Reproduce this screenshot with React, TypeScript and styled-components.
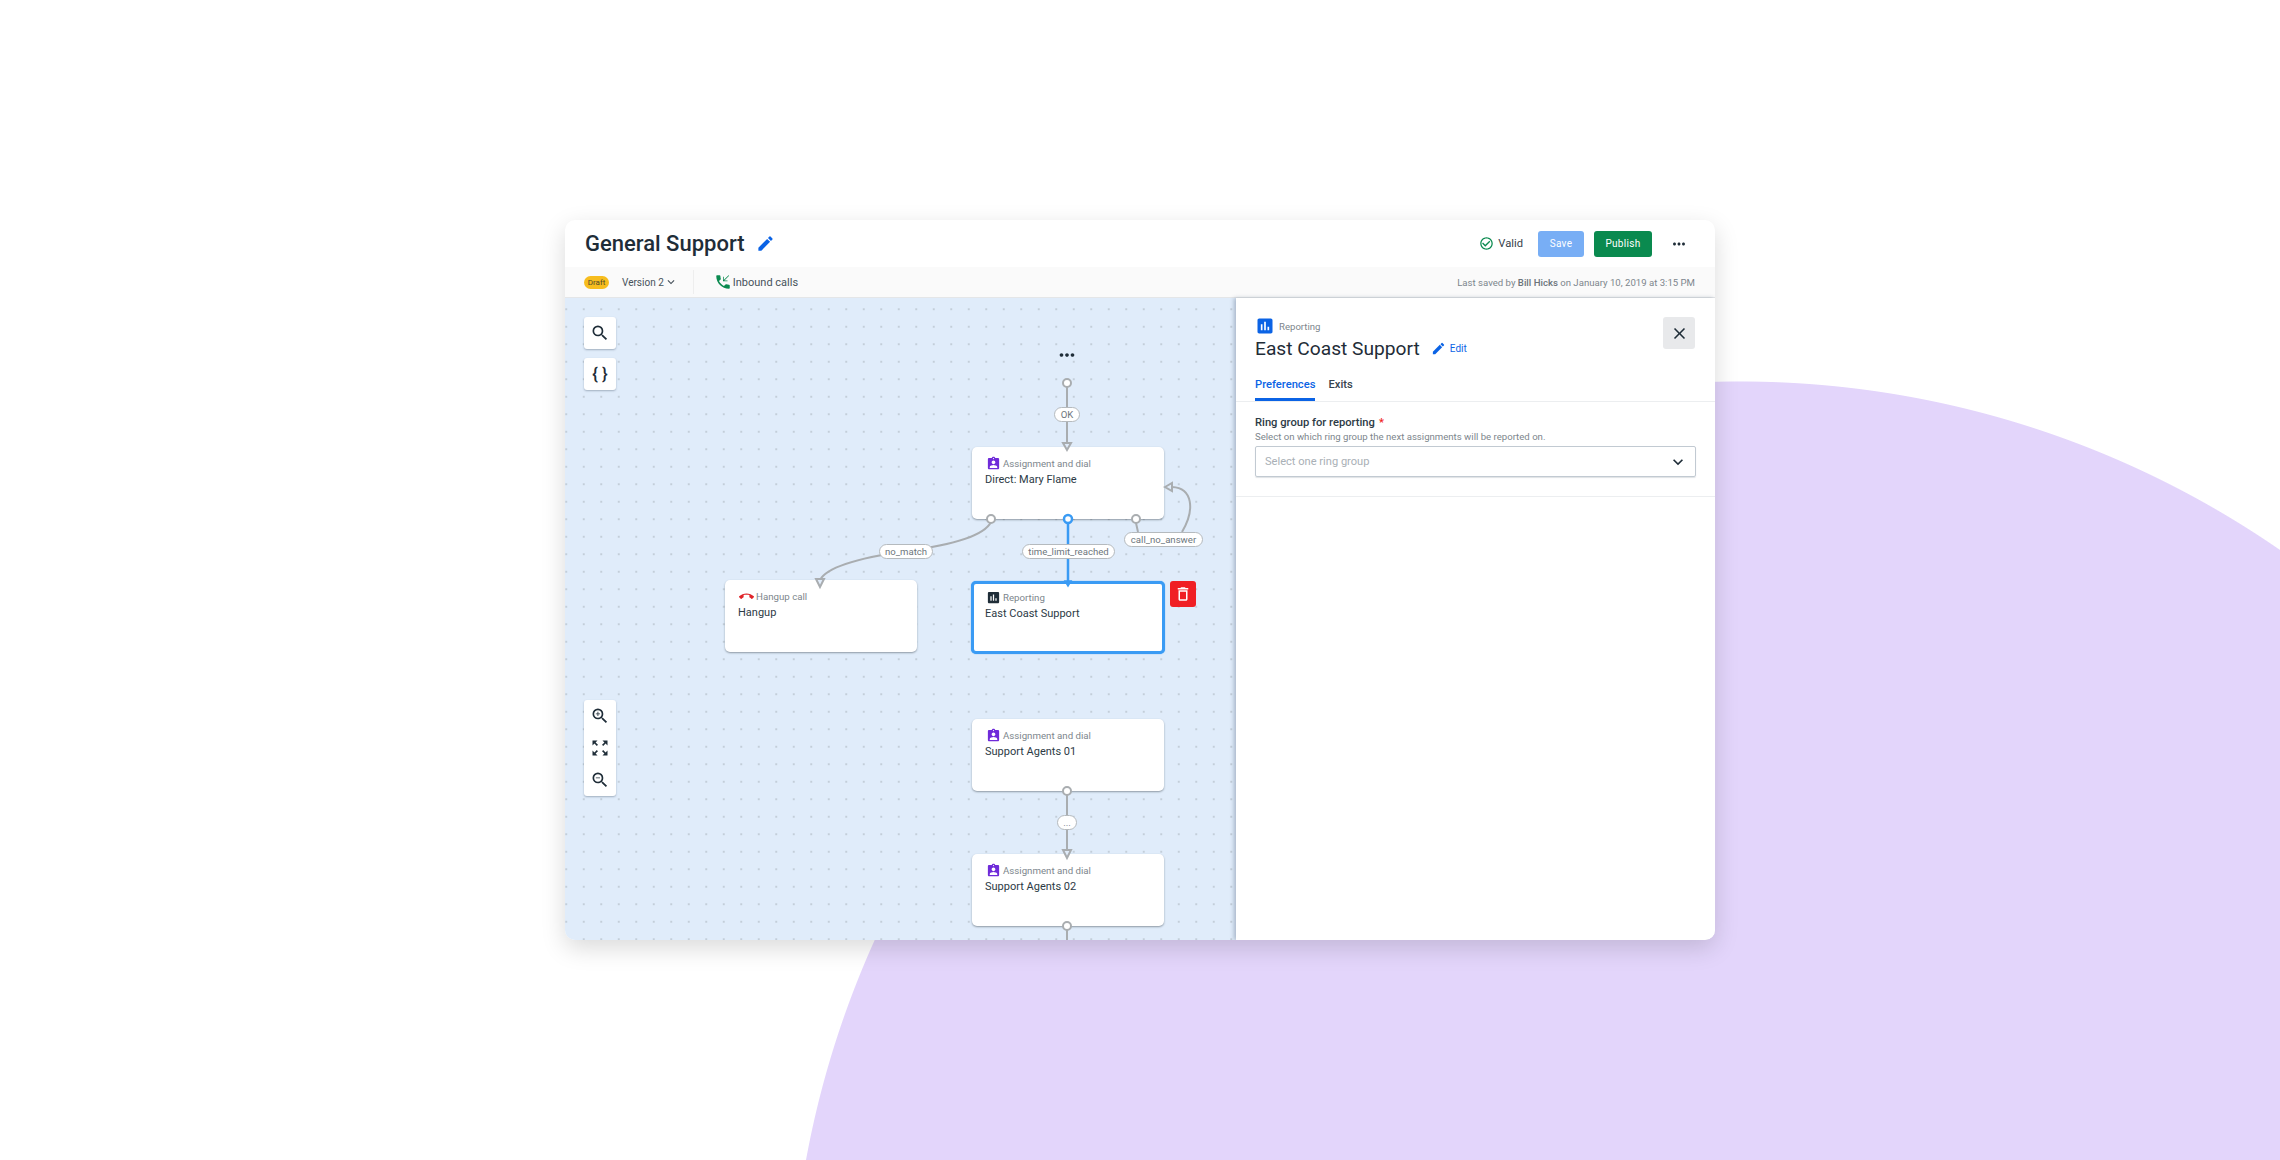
import styled, { createGlobalStyle } from 'styled-components';
import {
  MdAssessment,
  MdAssignmentInd,
  MdCallEnd,
  MdCheckCircleOutline,
  MdClose,
  MdDeleteOutline,
  MdEdit,
  MdKeyboardArrowDown,
  MdMoreHoriz,
  MdPhoneCallback,
  MdSearch,
  MdZoomIn,
  MdZoomOut,
  MdZoomOutMap,
} from 'react-icons/md';

const GlobalStyle = createGlobalStyle`
  html, body {
    margin: 0;
    padding: 0;
  }
  body {
    font-family: Roboto, "Noto Sans", sans-serif;
    color: #20303c;
    -webkit-font-smoothing: antialiased;
  }
`;

const Page = styled.div`
  width: 2280px;
  height: 1160px;
  overflow: hidden;
  box-sizing: border-box;
  padding: 220px 0 0 565px;
  background: radial-gradient(circle 950px at 1740px 1331px, #e3d5fb 99.9%, #ffffff 100%);
`;

const Window = styled.div`
  width: 1150px;
  height: 720px;
  display: flex;
  flex-direction: column;
  border-radius: 10px;
  overflow: hidden;
  background: #fff;
  box-shadow: 0 8px 24px rgba(0, 0, 0, 0.15);
`;

const Header = styled.header`
  height: 47px;
  flex: none;
  display: flex;
  align-items: center;
  padding: 0 20px;
`;

const Title = styled.h1`
  margin: 0;
  font-size: 22px;
  font-weight: 500;
  color: #1f2d38;
`;

const TitleEdit = styled.span`
  display: flex;
  margin-left: 11px;
  color: #0b63e5;
  font-size: 19px;
`;

const Spacer = styled.div`
  flex: 1;
`;

const Valid = styled.div`
  display: flex;
  align-items: center;
  gap: 4px;
  font-size: 11.2px;
  color: #37434d;
  margin-right: 15px;
  svg {
    color: #0a8a4f;
    font-size: 15px;
  }
`;

const ActionButton = styled.button<{ $bg: string; $w: number }>`
  width: ${(p) => p.$w}px;
  height: 26px;
  margin-right: 10px;
  border: 0;
  border-radius: 3px;
  padding: 0;
  background: ${(p) => p.$bg};
  color: #fff;
  font-family: inherit;
  font-size: 10px;
  font-weight: 400;
  letter-spacing: 0.3px;
`;

const MoreButton = styled.span`
  display: flex;
  margin: 0 7px 0 8px;
  font-size: 18px;
  color: #1f2d38;
`;

const SubBar = styled.div`
  height: 31px;
  flex: none;
  display: flex;
  align-items: center;
  padding: 0 20px 0 19px;
  background: #fafafa;
  border-bottom: 1px solid #e4e6e8;
  box-sizing: border-box;
`;

const Badge = styled.span`
  width: 25px;
  height: 13px;
  border-radius: 7px;
  background: #f7bd1e;
  color: #4f4a2a;
  font-size: 8px;
  line-height: 13px;
  text-align: center;
`;

const VersionPicker = styled.div`
  display: flex;
  align-items: center;
  margin-left: 13px;
  font-size: 10px;
  color: #47525b;
  svg {
    font-size: 14px;
  }
`;

const BarDivider = styled.div`
  width: 1px;
  height: 24px;
  margin: 0 20px 0 15px;
  background: #eeeeee;
`;

const CallType = styled.div`
  display: flex;
  align-items: center;
  gap: 1px;
  font-size: 11px;
  color: #47525b;
  svg {
    color: #0a8a4f;
    font-size: 18px;
  }
`;

const SavedNote = styled.div`
  font-size: 9.6px;
  color: #7d868d;
  b {
    font-weight: 500;
    color: #6b747b;
  }
`;

const Body = styled.div`
  flex: 1;
  display: flex;
  min-height: 0;
`;

const Canvas = styled.div`
  position: relative;
  flex: 1;
  overflow: hidden;
  padding: 19px;
  display: flex;
  flex-direction: column;
  align-items: flex-start;
  background-color: #e0ecfa;
  background-image: radial-gradient(circle, #c3ced9 0.7px, transparent 1.1px);
  background-size: 17.5px 17.5px;
  background-position: -7.5px 2.5px;
`;

const ToolCard = styled.div<{ $top?: number }>`
  width: 32px;
  flex: none;
  display: flex;
  flex-direction: column;
  margin-top: ${(p) => p.$top ?? 0}px;
  background: #fff;
  border-radius: 3px;
  box-shadow: 0 1px 2px rgba(40, 60, 80, 0.35);
`;

const ToolIcon = styled.span`
  height: 32px;
  display: flex;
  align-items: center;
  justify-content: center;
  font-size: 20px;
  color: #1f2d38;
`;

const Braces = styled(ToolIcon)`
  font-size: 17px;
  font-weight: 500;
`;

const Edges = styled.svg`
  position: absolute;
  left: 0;
  top: 0;
`;

const Dots = styled.span`
  position: absolute;
  left: 485px;
  top: 46px;
  width: 34px;
  display: flex;
  justify-content: center;
  font-size: 22px;
  color: #1f2d38;
`;

const Node = styled.div<{ $x: number; $y: number; $selected?: boolean }>`
  position: absolute;
  left: ${(p) => p.$x}px;
  top: ${(p) => p.$y}px;
  width: ${(p) => (p.$selected ? 194 : 192)}px;
  height: ${(p) => (p.$selected ? 73 : 72)}px;
  box-sizing: border-box;
  padding: ${(p) => (p.$selected ? '5px 11px' : '8px 13px')};
  background: #fff;
  border-radius: 5px;
  border: ${(p) => (p.$selected ? '3px solid #3a9bf4' : '0')};
  box-shadow: ${(p) => (p.$selected ? '0 0 1px #3a9bf4' : '0 1px 2px rgba(40, 50, 60, 0.45)')};
`;

const NodeKind = styled.div<{ $tint: string }>`
  display: flex;
  align-items: center;
  gap: 2px;
  height: 16px;
  padding-left: 1px;
  font-size: 9.7px;
  color: #7d868d;
  svg {
    font-size: 15px;
    color: ${(p) => p.$tint};
  }
`;

const NodeName = styled.div`
  margin-top: 1px;
  font-size: 11px;
  line-height: 15px;
  color: #2c3a45;
`;

const EdgeLabel = styled.span<{ $x: number; $y: number; $w: number }>`
  position: absolute;
  left: ${(p) => p.$x}px;
  top: ${(p) => p.$y}px;
  width: ${(p) => p.$w}px;
  height: 15px;
  box-sizing: border-box;
  border: 1px solid #b5babe;
  border-radius: 8px;
  background: #fff;
  color: #6d767d;
  font-size: 9.6px;
  line-height: 13px;
  text-align: center;
`;

const DeleteNode = styled.span`
  position: absolute;
  left: 605px;
  top: 283px;
  width: 26px;
  height: 26px;
  display: flex;
  align-items: center;
  justify-content: center;
  background: #f01f24;
  border-radius: 3px;
  color: #fff;
  font-size: 18px;
`;

const Panel = styled.aside`
  width: 479px;
  flex: none;
  position: relative;
  background: #fff;
  box-shadow: -2px 0 4px rgba(40, 60, 90, 0.3);
`;

const PanelHead = styled.div`
  position: relative;
  padding: 19px 20px 0;
`;

const KindRow = styled.div`
  display: flex;
  align-items: center;
  gap: 4px;
  height: 18px;
  font-size: 9.6px;
  color: #7d868d;
  svg {
    font-size: 20px;
    color: #0b63e5;
    margin-left: -1px;
  }
`;

const NameRow = styled.div`
  display: flex;
  align-items: center;
  height: 26px;
`;

const NodeTitle = styled.h2`
  margin: 0 0 0 -1px;
  font-size: 19.2px;
  font-weight: 400;
  color: #1f2d38;
`;

const EditLink = styled.a`
  display: flex;
  align-items: center;
  gap: 4px;
  margin-left: 11px;
  font-size: 10px;
  color: #0b63e5;
  svg {
    font-size: 15px;
  }
`;

const CloseButton = styled.span`
  position: absolute;
  right: 20px;
  top: 19px;
  width: 32px;
  height: 32px;
  display: flex;
  align-items: center;
  justify-content: center;
  border-radius: 3px;
  background: #e8e9eb;
  color: #1f2d38;
  font-size: 19px;
`;

const Tabs = styled.div`
  display: flex;
  gap: 13px;
  margin-top: 13px;
  padding: 0 19px;
  border-bottom: 1px solid #eceef0;
  height: 27px;
`;

const Tab = styled.div<{ $active?: boolean }>`
  height: 27px;
  box-sizing: border-box;
  padding-top: 4px;
  font-size: 11.2px;
  font-weight: 500;
  color: ${(p) => (p.$active ? '#0b63e5' : '#37434d')};
  border-bottom: 3px solid ${(p) => (p.$active ? '#0b63e5' : 'transparent')};
`;

const Field = styled.div`
  padding: 13px 19px 19px 19px;
  border-bottom: 1px solid #eceef0;
`;

const FieldLabel = styled.div`
  font-size: 11.2px;
  line-height: 16px;
  font-weight: 500;
  color: #2c3a45;
  i {
    margin-left: 4px;
    font-style: normal;
    color: #f01f24;
  }
`;

const FieldHint = styled.div`
  font-size: 9.6px;
  line-height: 12px;
  color: #7d868d;
`;

const SelectBox = styled.div`
  height: 31px;
  margin-top: 3px;
  box-sizing: border-box;
  display: flex;
  align-items: center;
  justify-content: space-between;
  padding: 0 7px 0 9px;
  border: 1px solid #c2cad2;
  border-radius: 2px;
  box-shadow: 0 1px 1px rgba(40, 60, 80, 0.15);
  font-size: 11.1px;
  color: #a9b0b6;
  svg {
    font-size: 20px;
    color: #1f2d38;
  }
`;

const EDGE = '#a9adb0';
const BLUE = '#3a9bf4';

const Connectors = () => (
  <Edges width="671" height="642" fill="none">
    <g stroke={EDGE} strokeWidth="2">
      <path d="M502 89V146" />
      <path d="M426 224C418 240 380 248 341 253C300 259 262 268 255 282" />
      <path d="M571 225L573 234" />
      <path d="M617 234C630 212 628 190 607 189" />
      <path d="M502 497V555" />
      <path d="M502 632V642" />
      <path d="M498 145H506L502 152Z" fill="#e0ecfa" />
      <path d="M251 281H259L255 289Z" fill="#e0ecfa" />
      <path d="M600 189L607 185V193Z" fill="#e0ecfa" />
      <path d="M498 552H506L502 560Z" fill="#e0ecfa" />
      <circle cx="502" cy="85" r="4" fill="#fff" />
      <circle cx="426" cy="221" r="4" fill="#fff" />
      <circle cx="571" cy="221" r="4" fill="#fff" />
      <circle cx="502" cy="493" r="4" fill="#fff" />
      <circle cx="502" cy="628" r="4" fill="#fff" />
    </g>
    <g stroke={BLUE} strokeWidth="2.5">
      <path d="M503 225V283" />
      <path d="M500 283H506L503 288Z" fill={BLUE} strokeWidth="1.5" />
      <circle cx="503" cy="221" r="4" fill="#fff" />
    </g>
  </Edges>
);

const App = () => {
  return (
    <Page>
      <GlobalStyle />
      <Window>
        <Header>
          <Title>General Support</Title>
          <TitleEdit><MdEdit /></TitleEdit>
          <Spacer />
          <Valid><MdCheckCircleOutline />Valid</Valid>
          <ActionButton $bg="#78aef5" $w={46}>Save</ActionButton>
          <ActionButton $bg="#0a8a4f" $w={58}>Publish</ActionButton>
          <MoreButton><MdMoreHoriz /></MoreButton>
        </Header>
        <SubBar>
          <Badge>Draft</Badge>
          <VersionPicker>Version 2<MdKeyboardArrowDown /></VersionPicker>
          <BarDivider />
          <CallType><MdPhoneCallback />Inbound calls</CallType>
          <Spacer />
          <SavedNote>Last saved by <b>Bill Hicks</b> on January 10, 2019 at 3:15 PM</SavedNote>
        </SubBar>
        <Body>
          <Canvas>
            <ToolCard><ToolIcon><MdSearch /></ToolIcon></ToolCard>
            <ToolCard $top={9}><Braces>{'{ }'}</Braces></ToolCard>
            <ToolCard $top={310}>
              <ToolIcon><MdZoomIn /></ToolIcon>
              <ToolIcon><MdZoomOutMap /></ToolIcon>
              <ToolIcon><MdZoomOut /></ToolIcon>
            </ToolCard>

            <Dots><MdMoreHoriz /></Dots>

            <Node $x={407} $y={149}>
              <NodeKind $tint="#6f2bd9"><MdAssignmentInd />Assignment and dial</NodeKind>
              <NodeName>Direct: Mary Flame</NodeName>
            </Node>
            <Node $x={160} $y={282}>
              <NodeKind $tint="#e0242a"><MdCallEnd />Hangup call</NodeKind>
              <NodeName>Hangup</NodeName>
            </Node>
            <Node $x={406} $y={283} $selected>
              <NodeKind $tint="#1f2d38"><MdAssessment />Reporting</NodeKind>
              <NodeName>East Coast Support</NodeName>
            </Node>
            <DeleteNode><MdDeleteOutline /></DeleteNode>
            <Node $x={407} $y={421}>
              <NodeKind $tint="#6f2bd9"><MdAssignmentInd />Assignment and dial</NodeKind>
              <NodeName>Support Agents 01</NodeName>
            </Node>
            <Node $x={407} $y={556}>
              <NodeKind $tint="#6f2bd9"><MdAssignmentInd />Assignment and dial</NodeKind>
              <NodeName>Support Agents 02</NodeName>
            </Node>

            <Connectors />
            <EdgeLabel $x={489} $y={109} $w={26}>OK</EdgeLabel>
            <EdgeLabel $x={314} $y={246} $w={54}>no_match</EdgeLabel>
            <EdgeLabel $x={457} $y={246} $w={93}>time_limit_reached</EdgeLabel>
            <EdgeLabel $x={559} $y={234} $w={79}>call_no_answer</EdgeLabel>
            <EdgeLabel $x={492} $y={517} $w={20}>...</EdgeLabel>
          </Canvas>
          <Panel>
            <PanelHead>
              <KindRow><MdAssessment />Reporting</KindRow>
              <NameRow>
                <NodeTitle>East Coast Support</NodeTitle>
                <EditLink><MdEdit />Edit</EditLink>
              </NameRow>
              <CloseButton><MdClose /></CloseButton>
            </PanelHead>
            <Tabs>
              <Tab $active>Preferences</Tab>
              <Tab>Exits</Tab>
            </Tabs>
            <Field>
              <FieldLabel>Ring group for reporting<i>*</i></FieldLabel>
              <FieldHint>Select on which ring group the next assignments will be reported on.</FieldHint>
              <SelectBox>Select one ring group<MdKeyboardArrowDown /></SelectBox>
            </Field>
          </Panel>
        </Body>
      </Window>
    </Page>
  );
};

export default App;
